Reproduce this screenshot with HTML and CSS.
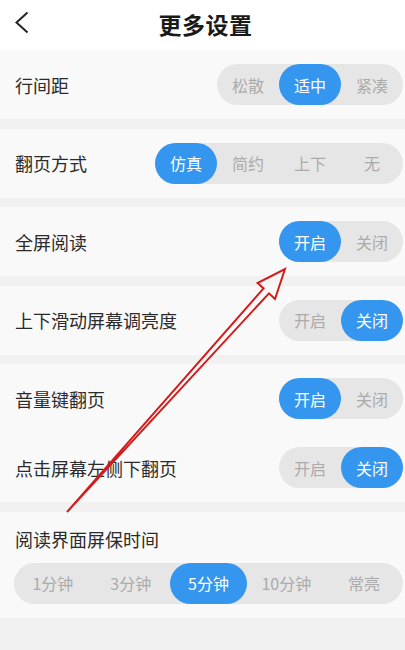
FILE: index.html
```html
<!DOCTYPE html>
<html lang="zh">
<head>
  <meta charset="UTF-8" />
  <meta name="viewport" content="width=device-width, initial-scale=1.0"/>
  <title>更多设置</title>
  <link rel="stylesheet" href="styles.css">
</head>
<body>
  <header class="topbar">
    <span class="back">
      <svg width="15" height="23" viewBox="0 0 15 23"><polyline points="13.5,1.5 2.5,11.5 13.5,21.5" fill="none" stroke="#222" stroke-width="2"/></svg>
    </span>
    <h1>更多设置</h1>
  </header>

  <main class="list">
    <section class="card">
      <div class="row">
        <span class="label">行间距</span>
        <div class="seg">
          <span class="opt">松散</span>
          <span class="opt on">适中</span>
          <span class="opt">紧凑</span>
        </div>
      </div>
    </section>

    <section class="card">
      <div class="row">
        <span class="label">翻页方式</span>
        <div class="seg">
          <span class="opt on">仿真</span>
          <span class="opt">简约</span>
          <span class="opt">上下</span>
          <span class="opt">无</span>
        </div>
      </div>
    </section>

    <section class="card">
      <div class="row">
        <span class="label">全屏阅读</span>
        <div class="seg">
          <span class="opt on">开启</span>
          <span class="opt">关闭</span>
        </div>
      </div>
    </section>

    <section class="card">
      <div class="row">
        <span class="label">上下滑动屏幕调亮度</span>
        <div class="seg">
          <span class="opt">开启</span>
          <span class="opt on">关闭</span>
        </div>
      </div>
    </section>

    <section class="card">
      <div class="row">
        <span class="label">音量键翻页</span>
        <div class="seg">
          <span class="opt on">开启</span>
          <span class="opt">关闭</span>
        </div>
      </div>
      <div class="row">
        <span class="label">点击屏幕左侧下翻页</span>
        <div class="seg">
          <span class="opt">开启</span>
          <span class="opt on">关闭</span>
        </div>
      </div>
    </section>

    <section class="card card-stack">
      <span class="label">阅读界面屏保时间</span>
      <div class="seg seg-wide">
        <span class="opt">1分钟</span>
        <span class="opt">3分钟</span>
        <span class="opt on">5分钟</span>
        <span class="opt">10分钟</span>
        <span class="opt">常亮</span>
      </div>
    </section>
  </main>

  <!-- hand-drawn pointer arrow on top of the list -->
  <svg class="pointer" width="405" height="650" viewBox="0 0 405 650">
    <polygon points="285,269 275,299 269,293.3 67,512 263.6,288.4 257.6,283"
             fill="rgba(250,250,250,0.5)" stroke="#d21c1c" stroke-width="2" stroke-linejoin="miter"/>
  </svg>
</body>
</html>
```

FILE: styles.css
```css
body {
  margin: 0;
  background-color: #f1f1f1;
  color: #2b2b2b;
  font-family: "Noto Sans CJK SC", "Noto Sans", sans-serif;
  position: relative;
  height: 650px;
  overflow: hidden;
}

.topbar {
  height: 50px;
  background-color: #fff;
  display: flex;
  align-items: center;
  justify-content: center;
  position: relative;
}

.topbar h1 {
  margin: 0 0 3px 6px;
  font-size: 23px;
  font-weight: 700;
  color: #1a1a1a;
  letter-spacing: 0.5px;
}

.back {
  position: absolute;
  left: 14px;
  top: 11px;
  display: flex;
}

.list {
  display: flex;
  flex-direction: column;
  gap: 9.5px;
}

.card {
  background-color: #f9f9f9;
}

.row {
  height: 69px;
  display: flex;
  align-items: center;
  justify-content: space-between;
  padding: 0 2px 0 15px;
}

.label {
  font-size: 18px;
  line-height: 22px;
}

.seg {
  display: flex;
  height: 41px;
  border-radius: 21px;
  background-color: #e6e6e6;
}

.opt {
  width: 62px;
  display: flex;
  align-items: center;
  justify-content: center;
  font-size: 16px;
  color: #ababab;
  border-radius: 21px;
}

.opt.on {
  background-color: #3496ee;
  color: #fff;
}

.card-stack {
  display: flex;
  flex-direction: column;
  gap: 13px;
  padding: 16px 2px 14px 14px;
}

.card-stack .label {
  padding-left: 1px;
}

.seg-wide .opt {
  flex: 1;
}

.pointer {
  position: absolute;
  left: 0;
  top: 0;
  pointer-events: none;
}
```
